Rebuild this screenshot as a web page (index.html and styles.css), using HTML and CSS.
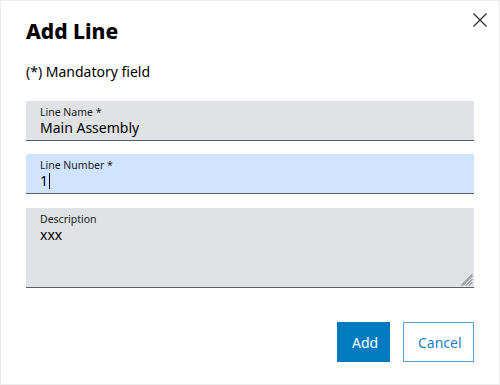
FILE: index.html
```html
<!DOCTYPE html>
<html lang="en">
<head>
<meta charset="utf-8">
<title>Add Line</title>
<link rel="stylesheet" href="styles.css">
</head>
<body>
<div class="dialog">
  <button class="close" aria-label="Close">
    <svg width="16" height="16" viewBox="0 0 16 16"><path d="M1.5 1.5 L14.5 14.5 M14.5 1.5 L1.5 14.5" stroke="#2e3033" stroke-width="1.3" fill="none"/></svg>
  </button>
  <h1 class="title">Add Line</h1>
  <p class="hint">(*) Mandatory field</p>
  <div class="fields">
    <div class="field">
      <span class="label">Line Name *</span>
      <span class="value">Main Assembly</span>
    </div>
    <div class="field field-focus">
      <span class="label">Line Number *</span>
      <span class="value">1<span class="caret"></span></span>
    </div>
    <div class="field field-area">
      <span class="label">Description</span>
      <span class="value">xxx</span>
      <svg class="grip" width="12" height="12" viewBox="0 0 12 12"><path d="M11.5 2 L2 11.5 M11.5 5 L5 11.5 M11.5 8 L8 11.5 M11.5 0 L0 11.5" stroke="#6d7175" stroke-width="1" fill="none"/></svg>
    </div>
  </div>
  <div class="actions">
    <button class="btn btn-primary">Add</button>
    <button class="btn btn-secondary">Cancel</button>
  </div>
</div>
</body>
</html>
```
FILE: styles.css
```css
html, body {
  margin: 0;
  padding: 0;
  background: #ffffff;
}
body {
  font-family: "Noto Sans", "Liberation Sans", sans-serif;
  color: #000000;
}
.dialog {
  position: relative;
  box-sizing: border-box;
  width: 500px;
  height: 385px;
  border: 1px solid #ececec;
  padding: 0 25px;
  background: #ffffff;
}
.close {
  position: absolute;
  top: 10px;
  right: 10px;
  width: 18px;
  height: 18px;
  padding: 1px;
  border: 0;
  background: none;
  display: flex;
}
.title {
  margin: 0;
  padding-top: 16px;
  font-size: 21px;
  line-height: 28px;
  font-weight: 800;
}
.hint {
  margin: 0;
  margin-top: 17px;
  font-size: 14px;
  line-height: 20px;
  color: #000;
}
.fields {
  display: flex;
  flex-direction: column;
  gap: 13px;
  margin-top: 19px;
}
.field {
  position: relative;
  box-sizing: border-box;
  height: 40px;
  background: #e0e2e5;
  border-bottom: 1px solid #595e62;
  padding: 4px 14px 0;
  display: flex;
  flex-direction: column;
}
.field-focus {
  background: #d1e4ff;
}
.field-area {
  height: 80px;
  margin-top: 1px;
}
.label {
  font-size: 10.5px;
  line-height: 14px;
  color: #1a1c1d;
}
.value {
  font-size: 14px;
  line-height: 18px;
  color: #000;
  display: flex;
  align-items: center;
}
.caret {
  display: inline-block;
  width: 1px;
  height: 16px;
  background: #000;
  margin-left: 1px;
}
.grip {
  position: absolute;
  right: 1px;
  bottom: 1px;
}
.actions {
  display: flex;
  justify-content: flex-end;
  gap: 13px;
  margin-top: 34px;
}
.btn {
  box-sizing: border-box;
  height: 40px;
  font-family: "Noto Sans", "Liberation Sans", sans-serif;
  font-size: 14px;
  padding: 0 14px;
  cursor: pointer;
}
.btn-primary {
  width: 53px;
  background: #007bc0;
  border: 1px solid #007bc0;
  color: #ffffff;
}
.btn-secondary {
  width: 71px;
  background: #ffffff;
  border: 1px solid #5aa3d9;
  color: #1f7fc4;
}
```
